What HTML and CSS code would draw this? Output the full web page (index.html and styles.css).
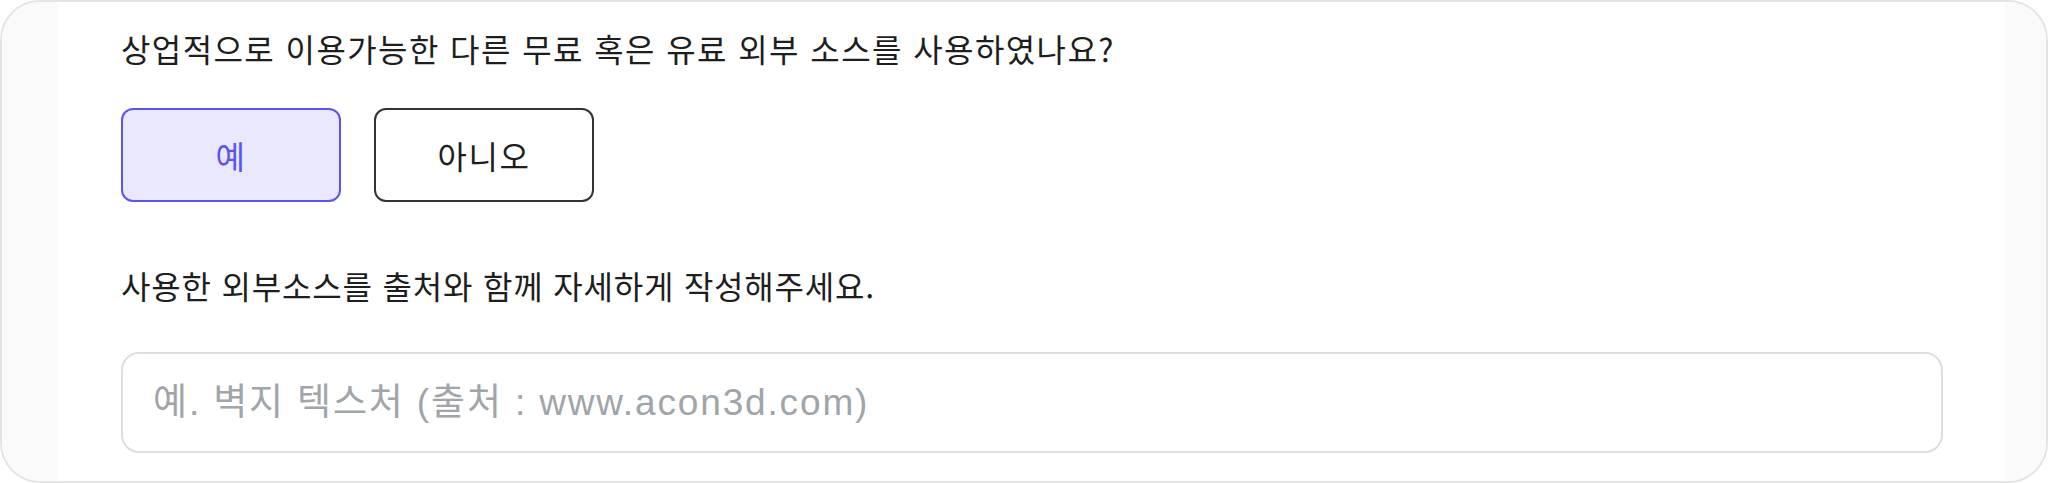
FILE: index.html
```html
<!DOCTYPE html>
<html lang="ko">
<head>
<meta charset="UTF-8">
<title>외부 소스 사용 여부</title>
<link rel="stylesheet" href="styles.css">
</head>
<body>

<div class="card">
  <div class="side"></div>

  <!-- 질문 영역 -->
  <main class="form">
    <p class="q">상업적으로 이용가능한 다른 무료 혹은 유료 외부 소스를 사용하였나요?</p>
    <div class="choices">
      <button class="choice on">예</button>
      <button class="choice">아니오</button>
    </div>

    <p class="q q2">사용한 외부소스를 출처와 함께 자세하게 작성해주세요.</p>
    <input class="src" placeholder="예. 벽지 텍스처 (출처 : www.acon3d.com)">
  </main>

  <div class="side"></div>
</div>

</body>
</html>
```

FILE: styles.css
```css
:root{--line:#e4e4e4;--side:#fafafa;--txt:#1e1e1e;--blue:#5a55f0;--blue-bg:#e9e8fd}
*{box-sizing:border-box}
body{
  margin:0;
  font-family:"Noto Sans CJK KR","Liberation Sans",sans-serif;
  color:var(--txt);background:#fff}
.card{
  display:grid;grid-template-columns:56px 1fr 41px;
  height:483px;
  border:2px solid var(--line);border-radius:40px;
  overflow:hidden}
.side{background:var(--side)}
.form{padding:26px 62px 0 63px}
.q{margin:0;font-size:32px;line-height:40px;letter-spacing:1.4px}
.q2{letter-spacing:.8px}
.choices{display:flex;gap:33px;margin:40px 0 63px}
.choice{
  width:220px;height:94px;
  font:inherit;font-size:32px;letter-spacing:1.5px;color:var(--txt);
  background:#fff;border:2px solid #333;border-radius:12px;cursor:pointer}
.choice.on{background:var(--blue-bg);border-color:var(--blue);color:var(--blue)}
.src{
  display:block;width:100%;height:101px;margin-top:47px;
  padding:0 30px;
  font-family:"Liberation Sans","Noto Sans CJK KR",sans-serif;font-size:37px;letter-spacing:1.85px;
  border:2px solid #dedede;border-radius:18px;outline:none}
.src::placeholder{color:#a0a5aa}
```
